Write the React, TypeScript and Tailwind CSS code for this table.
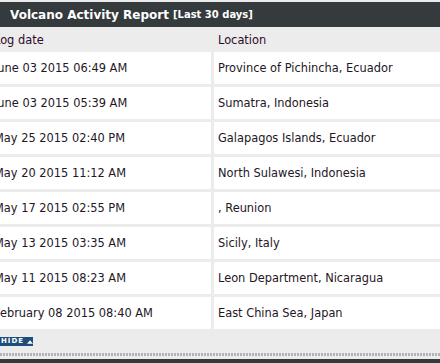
import React from "react";

const rows: [string, string][] = [
  ["June 03 2015 06:49 AM", "Province of Pichincha, Ecuador"],
  ["June 03 2015 05:39 AM", "Sumatra, Indonesia"],
  ["May 25 2015 02:40 PM", "Galapagos Islands, Ecuador"],
  ["May 20 2015 11:12 AM", "North Sulawesi, Indonesia"],
  ["May 17 2015 02:55 PM", ", Reunion"],
  ["May 13 2015 03:35 AM", "Sicily, Italy"],
  ["May 11 2015 08:23 AM", "Leon Department, Nicaragua"],
  ["February 08 2015 08:40 AM", "East China Sea, Japan"],
];

export default function App() {
  return (
    <div
      className="w-[440px] h-[363px] overflow-hidden bg-[#ececec] pt-[2px] flex flex-col"
      style={{ fontFamily: '"DejaVu Sans", Verdana, sans-serif' }}
    >
      <div className="h-[25px] shrink-0 bg-[#353a3d] pl-[10px] flex items-center gap-[4px] text-white">
        <span className="text-[12px] font-bold leading-none">Volcano Activity Report</span>
        <span className="text-[10px] font-bold leading-none">[Last 30 days]</span>
      </div>
      <div className="ml-[-10px] w-[470px] flex flex-col">
        <div className="h-[25px] grid grid-cols-[221px_1fr] gap-x-[3px] text-[11.4px] text-[#2e0a28]">
          <div className="pl-[4px] pt-[2px] flex items-center">Log date</div>
          <div className="pl-[4px] pt-[2px] flex items-center">Location</div>
        </div>
        <div className="flex flex-col gap-y-[3px]">
          {rows.map(([d, l], i) => (
            <div
              key={i}
              className="h-[32px] grid grid-cols-[221px_1fr] gap-x-[3px] text-[11.4px] text-[#241626]"
            >
              <div className="bg-white pl-[4px] pt-[1px] flex items-center">{d}</div>
              <div className="bg-white pl-[4px] pt-[1px] flex items-center">{l}</div>
            </div>
          ))}
        </div>
      </div>
      <div className="h-[8px] shrink-0" />
      <div className="h-[9px] shrink-0 flex">
        <div className="ml-[-3px] w-[36px] h-[9px] bg-[#1d4d7c] flex items-center pl-[4px] gap-[3px]">
          <span className="text-[7px] font-bold text-white leading-none tracking-[1px]">HIDE</span>
          <svg width="7" height="4" viewBox="0 0 7 4" className="block">
            <polygon points="3.5,0 7,4 0,4" fill="#ffffff" />
          </svg>
        </div>
      </div>
      <div className="h-[7px] shrink-0" />
      <div className="h-[3px] shrink-0 bg-[repeating-linear-gradient(90deg,#b3b3b3_0px,#b3b3b3_2px,transparent_2px,transparent_3px)]" />
      <div className="h-[3px] shrink-0" />
      <div className="flex-1 bg-[#353a3d]" />
    </div>
  );
}
